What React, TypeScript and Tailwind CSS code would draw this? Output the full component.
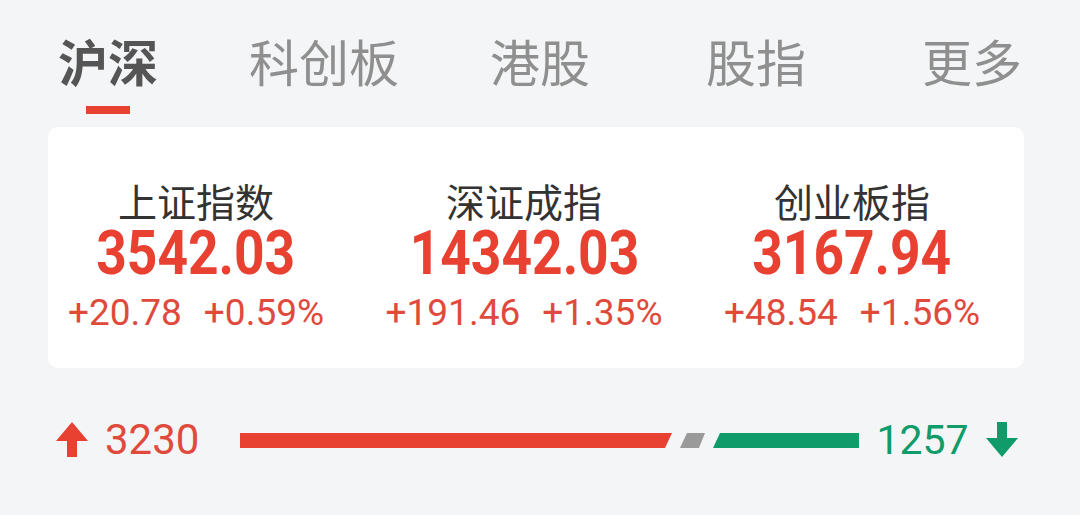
const tabs = ["沪深", "科创板", "港股", "股指", "更多"];

const indices = [
  { name: "上证指数", value: "3542.03", change: "+20.78", pct: "+0.59%" },
  { name: "深证成指", value: "14342.03", change: "+191.46", pct: "+1.35%" },
  { name: "创业板指", value: "3167.94", change: "+48.54", pct: "+1.56%" },
];

const cjk = "font-['Noto_Sans_CJK_SC',sans-serif]";
const num = "font-['Roboto','Noto_Sans_CJK_SC',sans-serif]";

function UpArrow() {
  return (
    <svg width="32" height="36" viewBox="0 0 32 36" className="shrink-0">
      <path d="M16 0 L32 19 L21 19 L21 35 L11 35 L11 19 L0 19 Z" fill="#e84132" />
    </svg>
  );
}

function DownArrow() {
  return (
    <svg width="32" height="36" viewBox="0 0 32 36" className="shrink-0">
      <path d="M11 0 L21 0 L21 16 L32 16 L16 35 L0 16 L11 16 Z" fill="#109b6a" />
    </svg>
  );
}

function RatioBar() {
  return (
    <svg width="619" height="15" viewBox="0 0 619 15" className="shrink-0">
      <polygon points="0,0 432,0 425,15 0,15" fill="#e84132" />
      <polygon points="447,0 465,0 459,15 440,15" fill="#9a9a9a" />
      <polygon points="480,0 619,0 619,15 473,15" fill="#109b6a" />
    </svg>
  );
}

export default function App() {
  return (
    <div className={`w-[1080px] h-[515px] overflow-hidden bg-[#f4f5f6] ${cjk}`}>
      <div className="grid grid-cols-5 pt-[35px]">
        {tabs.map((t, i) => (
          <div key={t} className="flex flex-col items-center">
            <span
              className={`text-[50px] leading-none ${
                i === 0 ? "font-bold text-[#555555]" : "text-[#8f8f8f]"
              }`}
            >
              {t}
            </span>
            <div className={`mt-[21px] h-[8px] w-[44px] ${i === 0 ? "bg-[#e84132]" : "bg-transparent"}`} />
          </div>
        ))}
      </div>

      <div className="ml-[48px] mt-[13px] w-[976px] h-[241px] rounded-[10px] bg-white pr-6 pt-[54px]">
        <div className="grid grid-cols-[296px_296px_296px] gap-x-8">
          {indices.map((x) => (
            <div key={x.name} className="flex flex-col items-center">
              <span className="text-[39px] leading-[38px] text-[#333333]">{x.name}</span>
              <span
                className={`mt-[4px] inline-block scale-x-[0.86] text-[62px] font-bold leading-[60px] text-[#e84132] ${num}`}
              >
                {x.value}
              </span>
              <div className={`mt-[11px] flex gap-[22px] text-[37px] leading-[38px] text-[#e04a3c] ${num}`}>
                <span>{x.change}</span>
                <span>{x.pct}</span>
              </div>
            </div>
          ))}
        </div>
      </div>

      <div className={`mt-[42px] flex h-[60px] items-center pl-[56px] ${num}`}>
        <UpArrow />
        <span className="ml-[17px] text-[42px] leading-none text-[#e04a3c]">3230</span>
        <div className="ml-[41px]">
          <RatioBar />
        </div>
        <span className="ml-[17px] text-[41px] leading-none text-[#109b6a]">1257</span>
        <div className="ml-[17px]">
          <DownArrow />
        </div>
      </div>
    </div>
  );
}
